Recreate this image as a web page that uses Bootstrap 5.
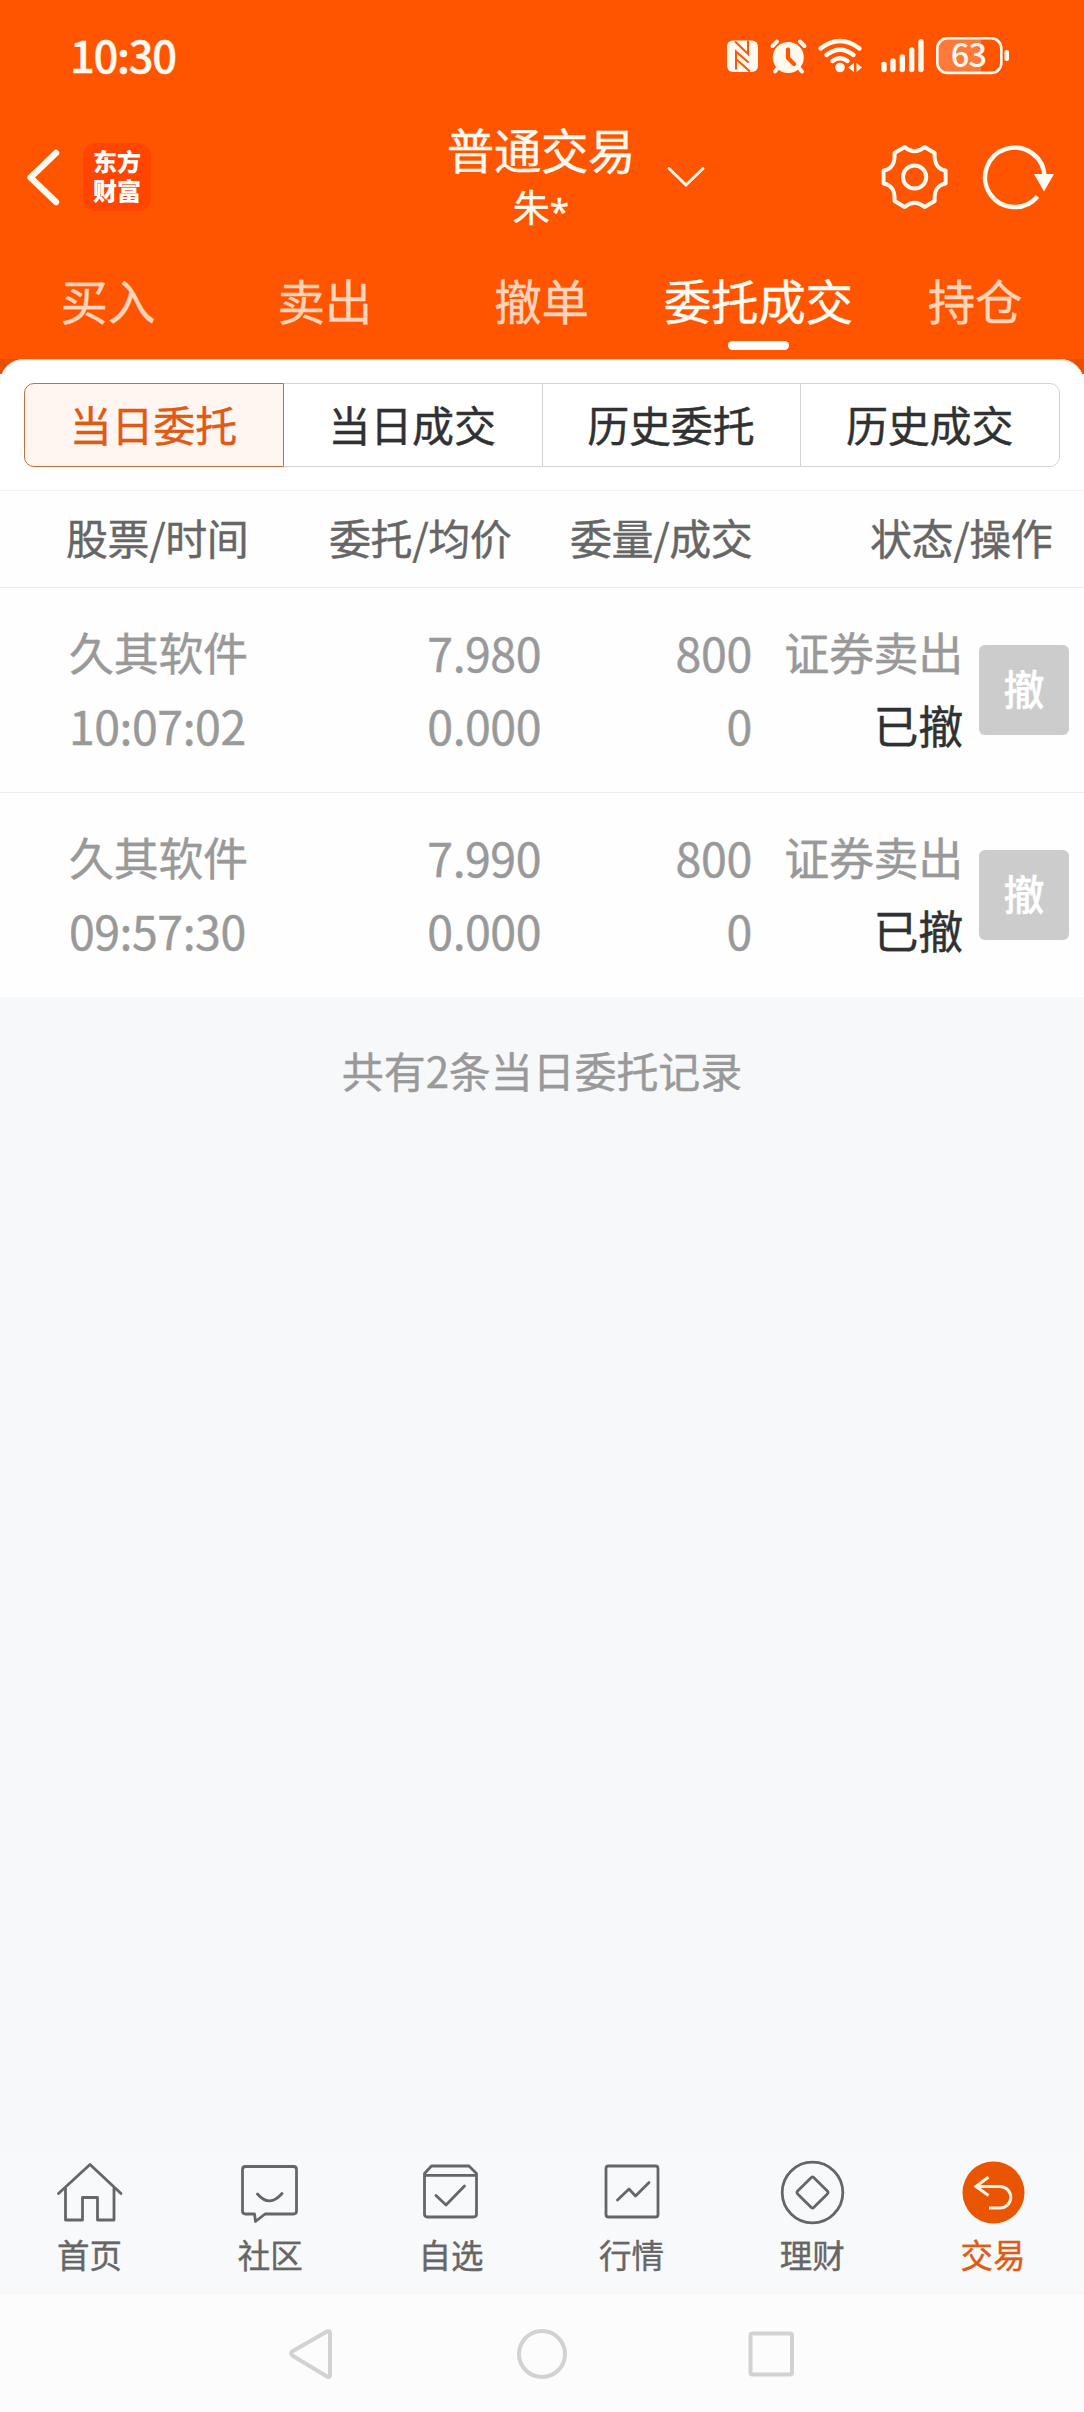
<!DOCTYPE html>
<html lang="zh-CN">
<head>
<meta charset="utf-8">
<meta name="viewport" content="width=device-width, initial-scale=1">
<title>普通交易</title>
<link href="https://cdn.jsdelivr.net/npm/bootstrap@5.3.0/dist/css/bootstrap.min.css" rel="stylesheet">
<style>
  body { font-family: "Noto Sans CJK SC", sans-serif; background: #f7f8fa; color: #303133; -webkit-text-stroke: .4px; }
  svg { display: block; flex: none; -webkit-text-stroke: 0; }
  .app-screen { width: 1084px; height: 2412px; overflow: hidden; }
  .app-head { background: #ff5500; color: #fff9f0; height: 359px; }
  .status-row { height: 110px; padding: 0 74px 0 70px; }
  .clock { font-size: 43.5px; line-height: 110px; font-weight: 500; letter-spacing: -1.3px; }
  .title-row { height: 134px; padding-left: 26px; padding-right: 28px; }
  .brand-tile { width: 68px; height: 68px; margin-left: 23px; border-radius: 13px; background: #ff4500; color: #fff; font-size: 24px; line-height: 29px; font-weight: 900; padding-top: 3px; -webkit-text-stroke: 0; }
  .title-box { margin-left: 295px; width: 190px; }
  .title-main { font-size: 47.5px; line-height: 54px; letter-spacing: -.4px; }
  .title-sub { font-size: 37px; line-height: 60px; height: 56px; }
  .title-sub span { font-family: "Noto Sans", sans-serif; font-size: 35px; line-height: 1; vertical-align: -2px; }
  .tab-row { height: 115px; }
  .tab-row .nav-link { flex: 1 1 0; padding: 0 1px 0 0; font-size: 47.5px; line-height: 111px; color: #ffd4bb; letter-spacing: -.2px; white-space: nowrap; position: relative; }
  .tab-row .nav-link.active { color: #fffaf2; }
  .tab-row .nav-link.active::after { content: ""; position: absolute; left: 78px; bottom: 9px; width: 61px; height: 9px; border-radius: 5px; background: #fff; }
  .sheet-wrap { background: linear-gradient(#e65000 15px, #fff 15px); }
  .sheet { background: #fff; border-radius: 24px 24px 0 0; padding: 24px 24px 23px; box-shadow: inset 0 1px 0 #ead2c3; }
  .seg { height: 84px; width: 1036px; }
  .seg .btn { flex: 1 1 0; padding: 0 1px 2px 0; font-size: 42px; line-height: 74px; border: 1px solid #d0d4d8; color: #303133; background: #fff; border-radius: 10px; letter-spacing: -.2px; }
  .seg .btn.active { color: #e05a14; background: #fff6f2; border-color: #c2703f; }
  .cols { display: grid; grid-template-columns: 69px 178px 294px 211px 211px 121px; }
  .head-cols { grid-template-columns: 66px 263px 241px 300px 1fr; border-top: 1px solid #f5f5f5; border-bottom: 1px solid #ebebeb; height: 98px; font-size: 42px; line-height: 91px; color: #666; letter-spacing: -.4px; white-space: nowrap; background: #fefefe; }
  .order { height: 205px; background: #fefefe; color: #999; font-size: 45px; line-height: 73px; padding-top: 27px; white-space: nowrap; letter-spacing: -.3px; }
  .order + .order { height: 204px; }
  .order:not(:last-child) { border-bottom: 1px solid #ebebeb; }
  .num { font-size: 46.5px; letter-spacing: -.3px; }
  .num-frac { letter-spacing: -.5px; }
  .state { color: #303133; }
  .btn-undo { width: 90px; height: 90px; margin: 30px 15px 0 auto; padding: 0 0 6px; border: 0; border-radius: 6px; background: #ccc; color: #fff; font-size: 41px; line-height: 84px; font-weight: 500; }
  .btn-undo:disabled { background: #ccc; color: #fff; opacity: 1; }
  .summary { color: #999; font-size: 42px; line-height: 60px; padding-top: 43px; letter-spacing: -.1px; }
  .dock { height: 143px; padding-top: 8px; color: #666; background: #f8f9fb; }
  .dock a { flex: 1 1 0; padding-right: 1.500px; color: #666; text-decoration: none; font-size: 32.5px; line-height: 52px; }
  .dock a.active { color: #e05a14; }
  .dock svg { margin: 0 auto; }
  .sys { height: 117px; background: #fcfcfc; padding: 0 289px; }
</style>
<script src="https://cdn.jsdelivr.net/npm/bootstrap@5.3.0/dist/js/bootstrap.bundle.min.js"></script>
</head>
<body>
<div class="app-screen d-flex flex-column">
  <header class="app-head">
    <div class="status-row d-flex justify-content-between">
      <div class="clock">10:30</div>
      <svg width="284" height="110" viewBox="727 0 284 110" fill="#fff9f0">
        <rect x="728" y="40.500" width="31" height="31.500" rx="6"/>
        <path d="M736 41.500L749 54V40.500M737 69.500V51.500L749.500 62.500M737 59L751 71.500" fill="none" stroke="#ff5500" stroke-width="2"/>
        <circle cx="789.300" cy="57.500" r="15.500"/>
        <path d="M773.500 46l4.500-4.500M805.500 46l-4.500-4.500M779 68l-3 3.500M800 68l3 3.500" stroke="#fff9f0" stroke-width="4" stroke-linecap="round"/>
        <path d="M789 49.500v8.500l6 6" fill="none" stroke="#ff5500" stroke-width="4.200" stroke-linecap="round" stroke-linejoin="round"/>
        <g fill="none" stroke="#fff9f0" stroke-width="4.400" stroke-linecap="round"><path d="M821.500 48.500q19.500-15 39 0M827.500 55q13.500-10.500 27 0M833.500 61q7.500-5.500 15 0"/></g>
        <circle cx="841" cy="67.500" r="4.800"/>
        <path d="M855 63v9l-6-4.500zM857.500 63v9l5.500-4.500z"/>
        <g stroke="#fff9f0" stroke-width="5.400" stroke-linecap="round"><path d="M885 64.500v5M894 61v8.500M903.300 57v12.500M912.700 50v19.500M922 42v27.500"/></g>
        <path d="M947 39h35v33h-35q-8-1-8-9v-15q0-8 8-9z" fill="#ff7a38"/>
        <rect x="938.300" y="38.300" width="64" height="34.600" rx="10" fill="none" stroke="#fff9f0" stroke-width="2.600"/>
        <rect x="1005.500" y="50" width="4.500" height="11" rx="2"/>
        <text x="969.500" y="67" text-anchor="middle" font-size="32.500" font-weight="500" letter-spacing="-.8">63</text>
      </svg>
    </div>
    <div class="title-row d-flex align-items-center">
      <svg width="34" height="58" viewBox="26 148 34 58" fill="none" stroke="#fff9f0" stroke-width="6.400" stroke-linecap="round" stroke-linejoin="round"><path d="M56 153L30.500 177.500L56 202"/></svg>
      <div class="brand-tile text-center">东方<br>财富</div>
      <div class="title-box text-center">
        <div class="title-main">普通交易</div>
        <div class="title-sub">朱<span>*</span></div>
      </div>
      <svg class="ms-auto" width="390" height="70" viewBox="666 142 390 70" fill="none" stroke="#fff9f0">
        <path d="M669 168.500L686 185L703 168.500" stroke-width="2.800" stroke-linecap="round"/>
        <g transform="translate(914.600 177)" stroke-width="4" stroke-linejoin="round">
          <path d="M-10-30Q0-21.500 10-30L20-24C19.500-13 23-8 31-6.500V6.500C23 8 19.500 13 20 24L10 30Q0 21.500-10 30L-20 24C-19.500 13-23 8-31 6.500V-6.500C-23-8-19.500-13-20-24Z"/>
          <circle r="11.600"/>
        </g>
        <path d="M1044.500 177A29.700 29.700 0 1 0 1037.500 196.500" stroke-width="4.400"/>
        <path d="M1034 174h20l-10 17.500z" fill="#fff9f0" stroke="none"/>
      </svg>
    </div>
    <nav class="tab-row nav text-center flex-nowrap">
      <a class="nav-link" href="#">买入</a>
      <a class="nav-link" href="#">卖出</a>
      <a class="nav-link" href="#">撤单</a>
      <a class="nav-link active" href="#">委托成交</a>
      <a class="nav-link" href="#">持仓</a>
    </nav>
  </header>

  <main class="flex-grow-1">
    <div class="sheet-wrap">
      <div class="sheet">
        <div class="seg btn-group">
          <button class="btn active" type="button">当日委托</button>
          <button class="btn" type="button">当日成交</button>
          <button class="btn" type="button">历史委托</button>
          <button class="btn" type="button">历史成交</button>
        </div>
      </div>
    </div>
    <div class="cols head-cols">
      <span></span><span>股票/时间</span><span>委托/均价</span><span>委量/成交</span><span>状态/操作</span>
    </div>
    <section>
      <div class="cols order">
        <span></span>
        <div>久其软件<div class="num num-frac">10:07:02</div></div>
        <div class="text-end num num-frac">7.980<br>0.000</div>
        <div class="text-end num">800<br>0</div>
        <div class="text-end">证券卖出<div class="state">已撤</div></div>
        <button class="btn btn-undo" type="button" disabled>撤</button>
      </div>
      <div class="cols order">
        <span></span>
        <div>久其软件<div class="num num-frac">09:57:30</div></div>
        <div class="text-end num num-frac">7.990<br>0.000</div>
        <div class="text-end num">800<br>0</div>
        <div class="text-end">证券卖出<div class="state">已撤</div></div>
        <button class="btn btn-undo" type="button" disabled>撤</button>
      </div>
    </section>
    <div class="summary text-center">共有2条当日委托记录</div>
  </main>

  <nav class="dock d-flex text-center">
    <a href="#"><svg width="70" height="68" viewBox="55 2161 70 68" fill="none" stroke="#666" stroke-width="2.800" stroke-linecap="round" stroke-linejoin="round"><path d="M58.500 2194.500L90 2165.500L121 2194.500M65.500 2189V2221H82.500V2198.500H97.500V2221H114V2189"/></svg>首页</a>
    <a href="#"><svg width="70" height="68" viewBox="235 2161 70 68" fill="none" stroke="#666" stroke-width="2.800" stroke-linecap="round" stroke-linejoin="round"><path d="M245.500 2167.500H293.500Q296.500 2167.500 296.500 2170.500V2212Q296.500 2215 293.500 2215H265L255.500 2222.500L254.500 2215H245.500Q242.500 2215 242.500 2212V2170.500Q242.500 2167.500 245.500 2167.500ZM257.500 2195Q269.500 2209 282 2194.500"/></svg>社区</a>
    <a href="#"><svg width="70" height="68" viewBox="416 2161 70 68" fill="none" stroke="#666" stroke-width="2.800" stroke-linecap="round" stroke-linejoin="round"><path d="M424.500 2174.500L431.500 2167H469L476.500 2174.500V2215Q476.500 2218 473.500 2218H427.500Q424.500 2218 424.500 2215ZM424.500 2176.300H476.500M436 2196.500L446 2206L464.500 2187"/></svg>自选</a>
    <a href="#"><svg width="70" height="68" viewBox="596 2161 70 68" fill="none" stroke="#666" stroke-width="2.800" stroke-linecap="round" stroke-linejoin="round"><rect x="605" y="2167" width="52" height="51" rx="2.500"/><path d="M616.500 2201L628 2190L634.500 2197L648 2183.500"/></svg>行情</a>
    <a href="#"><svg width="70" height="68" viewBox="777 2161 70 68" fill="none" stroke="#666" stroke-width="2.800" stroke-linejoin="round"><circle cx="812.500" cy="2193.500" r="30.300"/><rect x="801" y="2182" width="23" height="23" rx="2" transform="rotate(45 812.500 2193.500)"/></svg>理财</a>
    <a class="active" href="#"><svg width="70" height="68" viewBox="958 2161 70 68" fill="none" stroke="#fff3e6" stroke-width="3" stroke-linejoin="miter"><circle cx="993.500" cy="2193.500" r="31" fill="#ea5504" stroke="none"/><path d="M988.500 2178L976 2187.500L988.500 2196.500M976 2187.500H1000A10.600 10.600 0 0 1 1000 2209H989"/></svg>交易</a>
  </nav>
  <div class="sys d-flex align-items-center justify-content-between">
    <svg width="506" height="52" viewBox="289 2328 506 52" fill="none" stroke="#d2d2d2" stroke-width="4" stroke-linejoin="round"><path d="M291.500 2354Q290.500 2352.500 293 2351L327 2331.500Q330 2330.500 330 2333V2375Q330 2378 327 2376.500L293 2356Q291.500 2355 291.500 2354Z"/><circle cx="542" cy="2354" r="23"/><rect x="750.500" y="2333.500" width="41.500" height="41" rx="2"/></svg>
  </div>
</div>
</body>
</html>
